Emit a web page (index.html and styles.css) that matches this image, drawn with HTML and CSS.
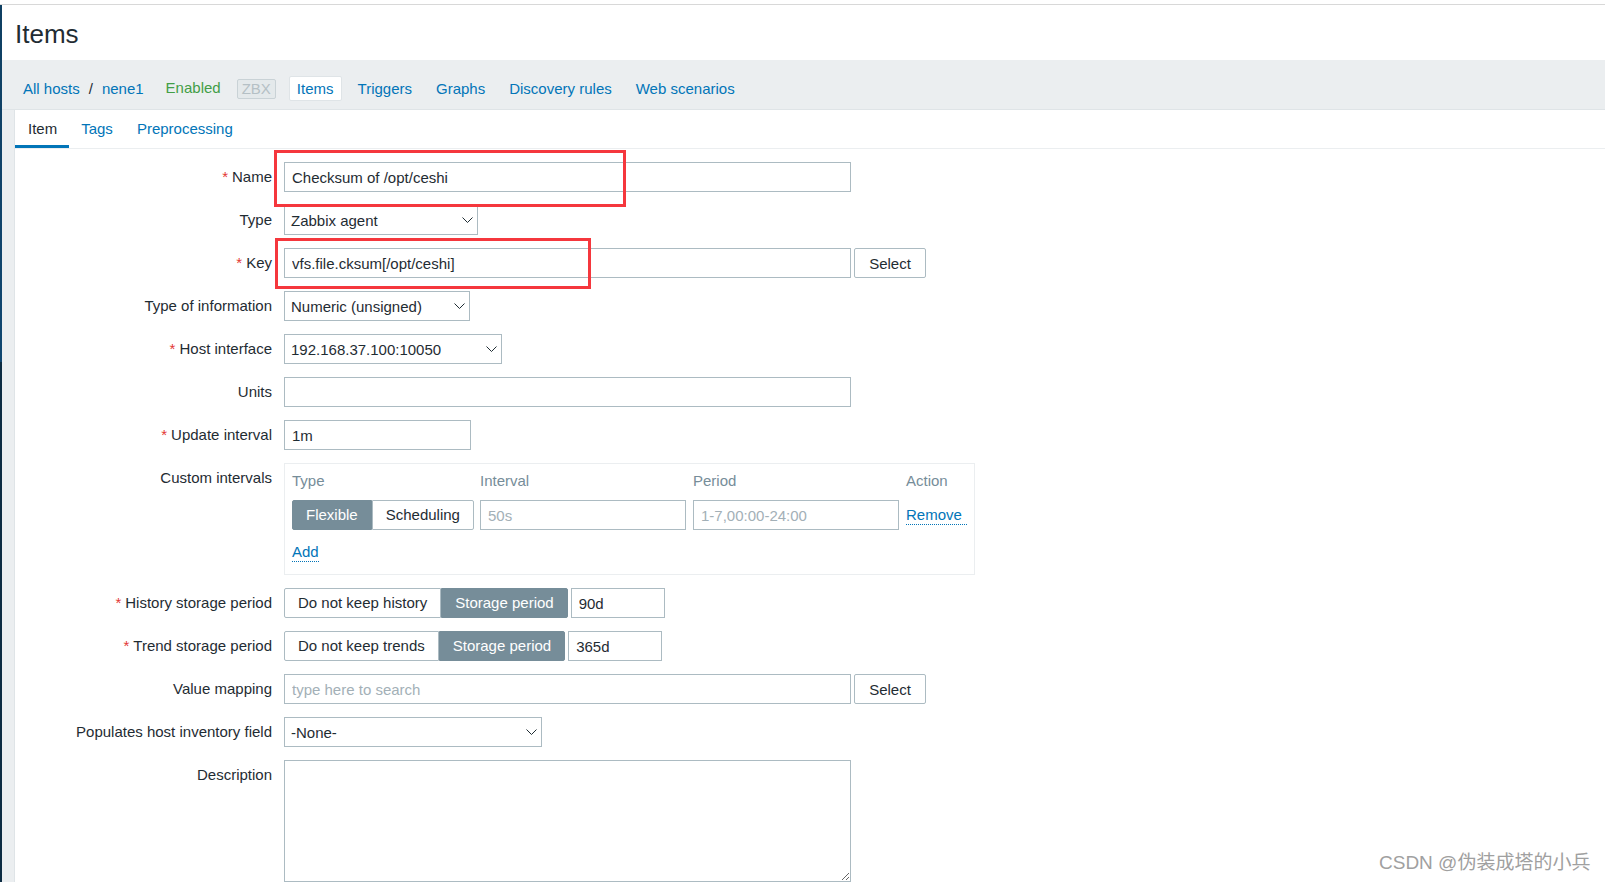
FILE: index.html
```html
<!DOCTYPE html>
<html lang="en">
<head>
<meta charset="utf-8">
<title>Items</title>
<link rel="stylesheet" href="styles.css">
</head>
<body>
<div class="topline"></div>
<div class="app">
  <div class="edge"></div>
  <div class="main">
    <header class="header"><h1 class="title">Items</h1></header>
    <nav class="navbar">
      <a class="crumb">All hosts</a><span class="sep">/</span><a class="crumb">nene1</a>
      <span class="status-enabled">Enabled</span>
      <span class="zbx">ZBX</span>
      <a class="navlink navlink-first active">Items</a>
      <a class="navlink">Triggers</a>
      <a class="navlink">Graphs</a>
      <a class="navlink">Discovery rules</a>
      <a class="navlink">Web scenarios</a>
    </nav>
    <div class="wrapper">
      <div class="card">
        <ul class="tabs">
          <li class="tab active">Item</li>
          <li class="tab">Tags</li>
          <li class="tab">Preprocessing</li>
        </ul>
        <form class="form">
          <label class="label req">Name</label>
          <div class="field"><input class="input w-wide" type="text" value="Checksum of /opt/ceshi"></div>

          <label class="label">Type</label>
          <div class="field"><div class="select w-type"><span>Zabbix agent</span><svg class="chev" width="11" height="6" viewBox="0 0 11 6"><path d="M.5.5l5 5 5-5" fill="none" stroke="#1f2c33" stroke-width="1"/></svg></div></div>

          <label class="label req">Key</label>
          <div class="field"><input class="input w-wide" type="text" value="vfs.file.cksum[/opt/ceshi]"><button class="btn-select" type="button">Select</button></div>

          <label class="label">Type of information</label>
          <div class="field"><div class="select w-toi"><span>Numeric (unsigned)</span><svg class="chev" width="11" height="6" viewBox="0 0 11 6"><path d="M.5.5l5 5 5-5" fill="none" stroke="#1f2c33" stroke-width="1"/></svg></div></div>

          <label class="label req">Host interface</label>
          <div class="field"><div class="select w-hi"><span>192.168.37.100:10050</span><svg class="chev" width="11" height="6" viewBox="0 0 11 6"><path d="M.5.5l5 5 5-5" fill="none" stroke="#1f2c33" stroke-width="1"/></svg></div></div>

          <label class="label">Units</label>
          <div class="field"><input class="input w-wide" type="text" value=""></div>

          <label class="label req">Update interval</label>
          <div class="field"><input class="input w-short" type="text" value="1m"></div>

          <label class="label">Custom intervals</label>
          <div class="field">
            <div class="ci-box">
              <div class="ci-grid ci-head">
                <span>Type</span><span>Interval</span><span>Period</span><span>Action</span>
              </div>
              <div class="ci-grid ci-row">
                <div class="seg"><span class="seg-btn on">Flexible</span><span class="seg-btn">Scheduling</span></div>
                <input class="input w-ci" type="text" placeholder="50s">
                <input class="input w-ci" type="text" placeholder="1-7,00:00-24:00">
                <a class="dlink">Remove</a>
              </div>
              <div class="ci-add"><a class="dlink">Add</a></div>
            </div>
          </div>

          <label class="label req">History storage period</label>
          <div class="field"><div class="seg"><span class="seg-btn">Do not keep history</span><span class="seg-btn on">Storage period</span></div><input class="input w-period" type="text" value="90d"></div>

          <label class="label req">Trend storage period</label>
          <div class="field"><div class="seg"><span class="seg-btn">Do not keep trends</span><span class="seg-btn on">Storage period</span></div><input class="input w-period" type="text" value="365d"></div>

          <label class="label">Value mapping</label>
          <div class="field"><input class="input w-wide" type="text" placeholder="type here to search"><button class="btn-select" type="button">Select</button></div>

          <label class="label">Populates host inventory field</label>
          <div class="field"><div class="select w-pop"><span>-None-</span><svg class="chev" width="11" height="6" viewBox="0 0 11 6"><path d="M.5.5l5 5 5-5" fill="none" stroke="#1f2c33" stroke-width="1"/></svg></div></div>

          <label class="label">Description</label>
          <div class="field"><textarea class="textarea"></textarea></div>
        </form>
      </div>
    </div>
  </div>
</div>
<div class="annot annot-name"></div>
<div class="annot annot-key"></div>
<div class="watermark">CSDN @伪装成塔的小兵</div>
</body>
</html>
```

FILE: styles.css
```css
* { box-sizing: border-box; }

body {
  margin: 0;
  font-family: "Liberation Sans", Arial, sans-serif;
  font-size: 15px;
  color: #1f2c33;
  background: #fff;
  overflow: hidden;
  height: 882px;
}

.topline {
  height: 5px;
  border-bottom: 1px solid #d8d8d8;
}

.app {
  display: flex;
  height: 877px;
}

.edge {
  width: 2px;
  flex: none;
  background: linear-gradient(to bottom, #0f3f62 0, #0f4670 357px, #0c2b42 357px, #0c2b42 100%);
}

.main {
  flex: 1;
  display: flex;
  flex-direction: column;
  min-width: 0;
}

.header {
  height: 56px;
  padding: 14px 0 0 13px;
}

.title {
  margin: 0;
  font-size: 26px;
  font-weight: normal;
  line-height: 30px;
  color: #1f2c33;
}

.navbar {
  height: 51px;
  background: #ebeef0;
  border-bottom: 1px solid #dfe4e7;
  display: flex;
  align-items: flex-start;
  padding: 16px 0 0 21px;
}

.navbar > * {
  height: 25px;
  line-height: 25px;
}

.crumb { color: #0275b8; }
.sep { margin: 0 9px; color: #1f2c33; }

.status-enabled {
  margin-left: 22px;
  color: #429e47;
  line-height: 23px;
}

.zbx {
  margin-left: 16px;
  margin-top: 3px;
  height: 20px;
  line-height: 18px;
  padding: 0 4px;
  border: 1px solid #c9d2d6;
  border-radius: 2px;
  background: #e4e9eb;
  color: #b5c0c5;
}

.navlink {
  margin-left: 8px;
  padding: 0 7px;
  border: 1px solid transparent;
  border-radius: 2px;
  line-height: 23px;
  color: #0275b8;
}

.navlink-first { margin-left: 13px; }

.navlink.active {
  background: #fff;
  border-color: #dfe4e7;
}

.wrapper {
  flex: 1;
  background: #ebeef0;
  padding-left: 12px;
}

.card {
  background: #fff;
  border-left: 1px solid #dfe4e7;
  height: 100%;
}

.tabs {
  display: flex;
  margin: 0;
  padding: 0;
  list-style: none;
  height: 39px;
  border-bottom: 1px solid #ebeef0;
}

.tab {
  padding: 2px 12px 0;
  height: 38px;
  line-height: 33px;
  color: #0275b8;
  border-bottom: 3px solid transparent;
}

.tab.active {
  padding-left: 13px;
  color: #1f2c33;
  border-bottom-color: #0275b8;
}

.form {
  display: grid;
  grid-template-columns: 257px 1fr;
  column-gap: 12px;
  row-gap: 13px;
  padding-top: 13px;
}

.label {
  text-align: right;
  line-height: 30px;
  white-space: nowrap;
}

.req::before {
  content: "*";
  color: #e33734;
  margin-right: 4px;
}

.field {
  display: flex;
  align-items: flex-start;
}

.input {
  height: 30px;
  border: 1px solid #acbbc2;
  padding: 0 7px;
  font-family: "Liberation Sans", Arial, sans-serif;
  font-size: 15px;
  color: #1f2c33;
  background: #fff;
  outline: none;
  border-radius: 0;
}

.input::placeholder {
  color: #a3b0b7;
  opacity: 1;
}

.w-wide { width: 567px; }
.w-short { width: 187px; }
.w-ci { width: 206px; }
.w-period { width: 94px; margin-left: 3px; }

.btn-select {
  margin-left: 3px;
  width: 72px;
  height: 30px;
  border: 1px solid #acbbc2;
  border-radius: 2px;
  background: #fff;
  font-family: "Liberation Sans", Arial, sans-serif;
  font-size: 15px;
  color: #1f2c33;
  padding: 0;
}

.select {
  display: flex;
  align-items: center;
  justify-content: space-between;
  height: 30px;
  border: 1px solid #acbbc2;
  padding: 0 4px 0 6px;
  background: #fff;
}

.chev { display: block; }

.w-type { width: 194px; }
.w-toi { width: 186px; }
.w-hi { width: 218px; }
.w-pop { width: 258px; }

.ci-box {
  width: 691px;
  border: 1px solid #ebeef0;
  padding: 7px 7px 12px 7px;
}

.ci-grid {
  display: grid;
  grid-template-columns: 182px 207px 207px auto;
  column-gap: 6px;
  align-items: center;
}

.ci-head {
  line-height: 20px;
  color: #768d99;
}

.ci-row {
  margin-top: 9px;
}

.ci-add {
  margin-top: 12px;
  line-height: 20px;
}

.dlink {
  color: #0275b8;
  border-bottom: 1px dotted #0275b8;
  line-height: 18px;
}

.ci-add .dlink { display: inline-block; }

.seg {
  display: flex;
}

.seg-btn {
  height: 30px;
  line-height: 28px;
  padding: 0 13px;
  border: 1px solid #acbbc2;
  background: #fff;
  color: #1f2c33;
  white-space: nowrap;
}

.seg-btn:first-child { border-radius: 2px 0 0 2px; }
.seg-btn:last-child { border-radius: 0 2px 2px 0; }

.seg-btn.on {
  background: #768d99;
  border-color: #768d99;
  color: #fff;
}

.textarea {
  width: 567px;
  height: 122px;
  border: 1px solid #acbbc2;
  font-family: "Liberation Sans", Arial, sans-serif;
  font-size: 15px;
  resize: vertical;
  outline: none;
}

.annot {
  position: absolute;
  border: 3px solid #f5373d;
}

.annot-name {
  left: 274px;
  top: 150px;
  width: 352px;
  height: 57px;
}

.annot-key {
  left: 275px;
  top: 238px;
  width: 316px;
  height: 51px;
}

.watermark {
  position: absolute;
  left: 1379px;
  top: 851px;
  font-family: "Liberation Sans", "Noto Sans CJK SC", sans-serif;
  font-size: 19px;
  line-height: 24px;
  color: #a0a0a0;
  white-space: nowrap;
}
```
